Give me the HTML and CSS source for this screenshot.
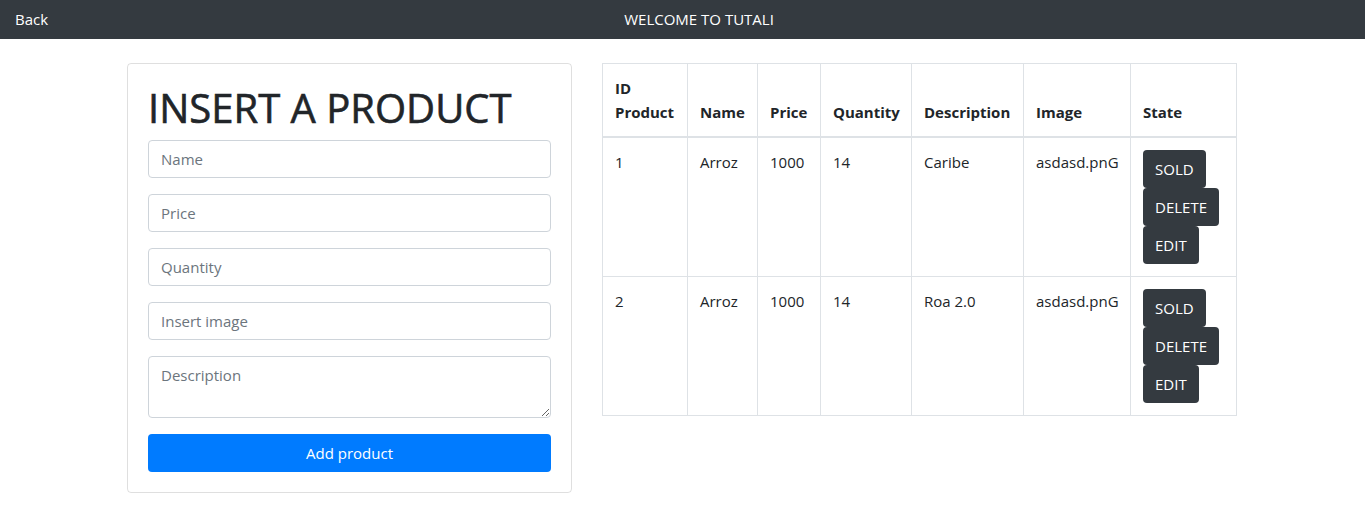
FILE: index.html
```html
<!DOCTYPE html>
<html lang="en">
<head>
<meta charset="utf-8">
<title>Tutali</title>
<link rel="stylesheet" href="styles.css">
</head>
<body>
<nav class="navbar">
  <a class="nav-back" href="#">Back</a>
  <span class="nav-title">WELCOME TO TUTALI</span>
  <span class="nav-end"></span>
</nav>
<main class="container">
  <section class="col-form">
    <div class="card">
      <h1 class="card-title">INSERT A PRODUCT</h1>
      <form class="form">
        <input class="field" type="text" placeholder="Name">
        <input class="field" type="text" placeholder="Price">
        <input class="field" type="text" placeholder="Quantity">
        <input class="field" type="text" placeholder="Insert image">
        <textarea class="field area" rows="2" placeholder="Description"></textarea>
        <button class="btn-primary" type="button">Add product</button>
      </form>
    </div>
  </section>
  <section class="col-table">
    <table class="table">
      <colgroup>
        <col class="c1"><col class="c2"><col class="c3"><col class="c4"><col class="c5"><col class="c6"><col class="c7">
      </colgroup>
      <thead>
        <tr>
          <th>ID Product</th><th>Name</th><th>Price</th><th>Quantity</th><th>Description</th><th>Image</th><th>State</th>
        </tr>
      </thead>
      <tbody>
        <tr>
          <td>1</td><td>Arroz</td><td>1000</td><td>14</td><td>Caribe</td><td>asdasd.pnG</td>
          <td><div class="actions"><button class="btn-dark">SOLD</button><button class="btn-dark">DELETE</button><button class="btn-dark">EDIT</button></div></td>
        </tr>
        <tr>
          <td>2</td><td>Arroz</td><td>1000</td><td>14</td><td>Roa 2.0</td><td>asdasd.pnG</td>
          <td><div class="actions"><button class="btn-dark">SOLD</button><button class="btn-dark">DELETE</button><button class="btn-dark">EDIT</button></div></td>
        </tr>
      </tbody>
    </table>
  </section>
</main>
</body>
</html>
```

FILE: styles.css
```css
* { box-sizing: border-box; }
html, body { margin: 0; }
body {
  font-family: "Open Sans", "Noto Sans", "Liberation Sans", sans-serif;
  font-size: 16px;
  line-height: 1.5;
  color: #212529;
  background: #fff;
}
.navbar {
  height: 39px;
  background: #343a40;
  display: flex;
  align-items: center;
  justify-content: space-between;
  padding: 0 15px;
  color: #fff;
  font-size: 15px;
}
.nav-back { color: #fff; text-decoration: none; }
.nav-title { color: #fff; }
.container {
  width: 1141px;
  margin: 24px auto 0;
  display: flex;
}
.col-form { width: 475px; padding: 0 15px; }
.col-table { width: 666px; padding: 0 15px; }
.card {
  border: 1px solid rgba(0,0,0,.125);
  border-radius: 4px;
  padding: 20px;
}
.card-title {
  margin: 0 0 8px;
  font-size: 40px;
  font-weight: 500;
  line-height: 48px;
  -webkit-text-stroke: 0.6px #212529;
}
.form { display: flex; flex-direction: column; gap: 16px; }
.field {
  display: block;
  width: 100%;
  height: 38px;
  padding: 6px 12px;
  font: inherit;
  font-size: 15px;
  line-height: 24px;
  color: #495057;
  border: 1px solid #ced4da;
  border-radius: 4px;
  background: #fff;
}
.field::placeholder { color: #6c757d; }
.area { height: 62px; resize: vertical; }
.btn-primary {
  height: 38px;
  border: 0;
  border-radius: 4px;
  background: #007bff;
  color: #fff;
  font: inherit;
  font-size: 15px;
  cursor: pointer;
}
.table {
  width: 634px;
  border-collapse: collapse;
  table-layout: fixed;
  font-size: 15px;
}
.c1 { width: 85px; } .c2 { width: 70px; } .c3 { width: 63px; } .c4 { width: 91px; }
.c5 { width: 112px; } .c6 { width: 107px; } .c7 { width: 106px; }
.table th, .table td {
  border: 1px solid #dee2e6;
  padding: 12px;
  text-align: left;
  vertical-align: top;
  line-height: 24px;
}
.table th {
  vertical-align: bottom;
  border-bottom-width: 2px;
  font-weight: 700;
}
.actions { display: flex; flex-direction: column; align-items: flex-start; }
.btn-dark {
  height: 38px;
  padding: 6px 12px;
  border: 0;
  border-radius: 4px;
  background: #343a40;
  color: #fff;
  font: inherit;
  font-size: 15px;
}
```
